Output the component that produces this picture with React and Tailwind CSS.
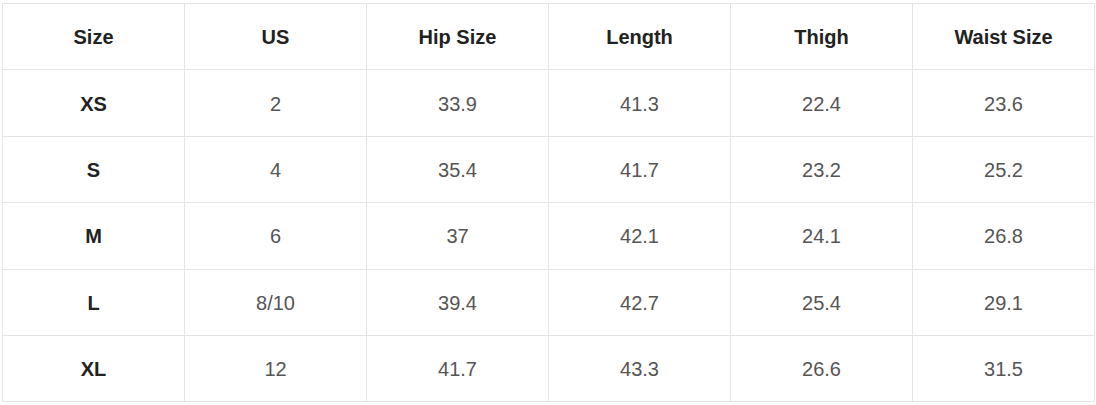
import React from "react";

const headers = ["Size", "US", "Hip Size", "Length", "Thigh", "Waist Size"];

const rows = [
  ["XS", "2", "33.9", "41.3", "22.4", "23.6"],
  ["S", "4", "35.4", "41.7", "23.2", "25.2"],
  ["M", "6", "37", "42.1", "24.1", "26.8"],
  ["L", "8/10", "39.4", "42.7", "25.4", "29.1"],
  ["XL", "12", "41.7", "43.3", "26.6", "31.5"],
];

export default function App() {
  return (
    <div className="w-[1096px] h-[405px] bg-white pt-[3px] pl-[2px] font-['Liberation_Sans',Arial,sans-serif]">
      <table className="w-[1093px] border-collapse table-fixed text-[20px]">
        <thead>
          <tr>
            {headers.map((h) => (
              <th
                key={h}
                className="h-[66.4px] pt-px border border-[#e4e4e4] text-center align-middle font-bold text-[#222]"
              >
                {h}
              </th>
            ))}
          </tr>
        </thead>
        <tbody>
          {rows.map((row) => (
            <tr key={row[0]}>
              {row.map((cell, i) => (
                <td
                  key={i}
                  className={`h-[66.4px] pt-px border border-[#e4e4e4] text-center align-middle ${
                    i === 0 ? "font-bold text-[#222]" : "text-[#555]"
                  }`}
                >
                  {cell}
                </td>
              ))}
            </tr>
          ))}
        </tbody>
      </table>
    </div>
  );
}
